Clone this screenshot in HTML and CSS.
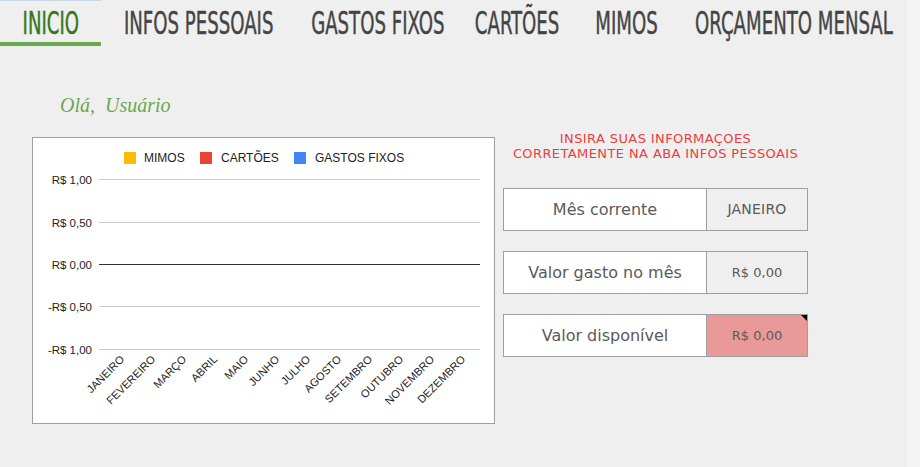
FILE: index.html
```html
<!DOCTYPE html>
<html lang="pt-BR">
<head>
<meta charset="utf-8">
<title>Início</title>
<link rel="stylesheet" href="styles.css">
</head>
<body>
<nav class="tabs">
  <div class="tab active"><span class="tab-label">INICIO</span></div>
  <div class="tab"><span class="tab-label">INFOS PESSOAIS</span></div>
  <div class="tab"><span class="tab-label">GASTOS FIXOS</span></div>
  <div class="tab"><span class="tab-label">CARTÕES</span></div>
  <div class="tab"><span class="tab-label">MIMOS</span></div>
  <div class="tab"><span class="tab-label">ORÇAMENTO MENSAL</span></div>
</nav>
<main class="page">
  <h1 class="greeting">Olá,&nbsp; Usuário</h1>
  <div class="content">
    <section class="chart-card">
      <svg class="chart" width="461" height="285" viewBox="0 0 461 285">
        <g class="legend">
          <rect x="91" y="14" width="12" height="12" fill="#fbbc04"/>
          <text x="111" y="24">MIMOS</text>
          <rect x="167" y="14" width="12" height="12" fill="#ea4335"/>
          <text x="188" y="24">CARTÕES</text>
          <rect x="261" y="14" width="12" height="12" fill="#4285f4"/>
          <text x="282" y="24">GASTOS FIXOS</text>
        </g>
        <g class="grid">
          <line x1="66" x2="447" y1="41.5" y2="41.5"/>
          <line x1="66" x2="447" y1="84.5" y2="84.5"/>
          <line x1="66" x2="447" y1="168.5" y2="168.5"/>
          <line x1="66" x2="447" y1="211.5" y2="211.5"/>
          <line class="zero" x1="66" x2="447" y1="126.5" y2="126.5"/>
        </g>
        <g class="yaxis">
          <text x="59" y="45.5">R$ 1,00</text>
          <text x="59" y="88.5">R$ 0,50</text>
          <text x="59" y="130.5">R$ 0,00</text>
          <text x="59" y="172.5">-R$ 0,50</text>
          <text x="59" y="215.5">-R$ 1,00</text>
        </g>
        <g class="xaxis">
          <text x="92" y="222" transform="rotate(-45 92 222)">JANEIRO</text>
          <text x="123" y="222" transform="rotate(-45 123 222)">FEVEREIRO</text>
          <text x="154" y="222" transform="rotate(-45 154 222)">MARÇO</text>
          <text x="185" y="222" transform="rotate(-45 185 222)">ABRIL</text>
          <text x="216" y="222" transform="rotate(-45 216 222)">MAIO</text>
          <text x="247" y="222" transform="rotate(-45 247 222)">JUNHO</text>
          <text x="278" y="222" transform="rotate(-45 278 222)">JULHO</text>
          <text x="309" y="222" transform="rotate(-45 309 222)">AGOSTO</text>
          <text x="340" y="222" transform="rotate(-45 340 222)">SETEMBRO</text>
          <text x="371" y="222" transform="rotate(-45 371 222)">OUTUBRO</text>
          <text x="402" y="222" transform="rotate(-45 402 222)">NOVEMBRO</text>
          <text x="433" y="222" transform="rotate(-45 433 222)">DEZEMBRO</text>
        </g>
      </svg>
    </section>
    <aside class="summary">
      <p class="notice">INSIRA SUAS INFORMAÇOES<br>CORRETAMENTE NA ABA INFOS PESSOAIS</p>
      <div class="row">
        <div class="label">Mês corrente</div>
        <div class="value month">JANEIRO</div>
      </div>
      <div class="row">
        <div class="label">Valor gasto no mês</div>
        <div class="value">R$ 0,00</div>
      </div>
      <div class="row">
        <div class="label">Valor disponível</div>
        <div class="value alert">R$ 0,00</div>
      </div>
    </aside>
  </div>
</main>
</body>
</html>
```

FILE: styles.css
```css
html, body {
  margin: 0;
  padding: 0;
}

body {
  width: 920px;
  height: 467px;
  overflow: hidden;
  background: linear-gradient(to right, #efefef 907px, #f4f4f4 907px);
  font-family: "DejaVu Sans", sans-serif;
}

.tabs {
  display: grid;
  grid-template-columns: 101px 195px 163px 117px 102px 231px;
  height: 47px;
}

.tab {
  display: flex;
  justify-content: center;
  align-items: flex-start;
  height: 46px;
  box-sizing: border-box;
  font-family: "Liberation Sans Narrow", "DejaVu Sans Condensed", "Liberation Sans", sans-serif;
  font-size: 32px;
  line-height: 46px;
  color: #444444;
  white-space: nowrap;
}

.tab.active {
  color: #38761d;
  border-bottom: 4px solid #6aa84f;
  box-shadow: inset 0 1px 0 #c9d6ea;
}

.tab-label {
  display: inline-block;
  transform: scaleX(0.63);
  -webkit-text-stroke: 0.45px currentColor;
}

.page {
  display: flex;
  flex-direction: column;
}

.greeting {
  margin: 44px 0 0 60px;
  font-family: "Liberation Serif", serif;
  font-style: italic;
  font-weight: normal;
  font-size: 20px;
  line-height: 28px;
  color: #6aa84f;
}

.content {
  display: flex;
  align-items: flex-start;
  margin-top: 10px;
  padding-left: 32px;
}

.chart-card {
  width: 461px;
  height: 285px;
  margin-top: 8px;
  background: #ffffff;
  border: 1px solid #9e9e9e;
}

.chart {
  display: block;
  font-family: "Liberation Sans", Arial, sans-serif;
}

.legend text {
  font-size: 12px;
  fill: #222222;
}

.grid line {
  stroke: #cccccc;
  stroke-width: 1;
}

.grid line.zero {
  stroke: #333333;
}

.yaxis text {
  font-size: 11.5px;
  fill: #222222;
  text-anchor: end;
}

.xaxis text {
  font-size: 11px;
  fill: #222222;
  text-anchor: end;
}

.summary {
  width: 305px;
  margin-left: 8px;
  display: flex;
  flex-direction: column;
}

.notice {
  margin: 0;
  padding-top: 1.5px;
  text-align: center;
  font-size: 13px;
  line-height: 15.5px;
  letter-spacing: 0.4px;
  color: #ec3d3d;
}

.row {
  display: flex;
  height: 41px;
  border: 1px solid #9e9e9e;
  margin-bottom: 20px;
}

.summary .notice + .row {
  margin-top: 26px;
}

.label {
  width: 202px;
  border-right: 1px solid #9e9e9e;
  background: #ffffff;
  display: flex;
  align-items: center;
  justify-content: center;
  font-size: 16px;
  color: #5a5a5a;
}

.value {
  flex: 1;
  position: relative;
  display: flex;
  align-items: center;
  justify-content: center;
  background: #efefef;
  font-size: 13px;
  color: #595959;
}

.value.month {
  font-size: 14px;
  letter-spacing: 0.2px;
}

.value.alert {
  background: #ea9999;
}

.value.alert::after {
  content: "";
  position: absolute;
  top: 0;
  right: 0;
  border-top: 6px solid #000000;
  border-left: 6px solid transparent;
}
```
